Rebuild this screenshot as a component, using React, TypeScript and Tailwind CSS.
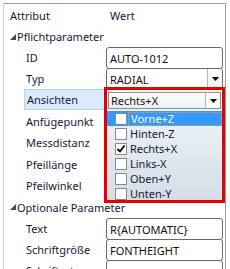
import React from "react";

const Tri = () => (
  <svg width="6" height="6" viewBox="0 0 6 6" className="shrink-0">
    <polygon points="6,0 6,6 0,6" fill="#4a4a4a" />
  </svg>
);

const Arrow = () => (
  <svg width="7" height="4" viewBox="0 0 7 4">
    <polygon points="0,0 7,0 3.5,4" fill="#000" />
  </svg>
);

const ValueBox = ({ children, dropdown }: { children?: React.ReactNode; dropdown?: boolean }) => (
  <div className="w-[117px] h-[22px] border border-[#6b6b6b] rounded-[3px] bg-white flex items-center overflow-hidden">
    <div className="flex-1 pl-[3px] text-[#111]">{children}</div>
    {dropdown && (
      <div className="w-[15px] h-full border-l border-[#b5b5b5] flex items-center justify-center bg-gradient-to-b from-white to-[#eef0f2]">
        <Arrow />
      </div>
    )}
  </div>
);

const Row = ({ label, h, children }: { label: string; h: string; children?: React.ReactNode }) => (
  <div className={`flex items-start ${h}`}>
    <div className={`w-[102px] ${h} flex items-center pl-[22px] text-[#15183a]`}>{label}</div>
    {children}
  </div>
);

const items = [
  { t: "Vorne+Z", hl: true, c: false },
  { t: "Hinten-Z", hl: false, c: false },
  { t: "Rechts+X", hl: false, c: true },
  { t: "Links-X", hl: false, c: false },
  { t: "Oben+Y", hl: false, c: false },
  { t: "Unten-Y", hl: false, c: false },
];

export default function App() {
  return (
    <div className="w-[230px] h-[269px] bg-white overflow-hidden relative font-['Noto_Sans',sans-serif] text-[11px] leading-none">
      <div className="ml-[3px] mt-[3px] w-[223px] h-[300px] border-t border-l border-r border-t-[#9c9c9c] border-r-[#9c9c9c] border-l-[#d6d6d6]">
        <div className="flex h-[22px] items-center text-[#15183a]">
          <div className="w-[102px] pl-[6px]">Attribut</div>
          <div className="pl-[4px]">Wert</div>
        </div>
        <div className="flex h-[21px] items-center pl-[6px] text-[#15183a]">
          <Tri />
          <span className="ml-[1px]">Pflichtparameter</span>
        </div>
        <Row label="ID" h="h-[21px]">
          <ValueBox>AUTO-1012</ValueBox>
        </Row>
        <Row label="Typ" h="h-[21px]">
          <ValueBox dropdown>RADIAL</ValueBox>
        </Row>
        <div className="flex items-start h-[21px]">
          <div className="w-[102px] h-[21px] pl-[20px]">
            <div className="h-[21px] bg-[#d9eaf8] border-y border-l border-[#b3d4f0] flex items-center pl-[2px] text-[#15183a]">
              Ansichten
            </div>
          </div>
        </div>
        <Row label="Anfügepunkt" h="h-[22px]" />
        <Row label="Messdistanz" h="h-[21px]" />
        <Row label="Pfeillänge" h="h-[22px]" />
        <Row label="Pfeilwinkel" h="h-[21px]" />
        <div className="flex h-[22px] items-center pl-[6px] text-[#15183a]">
          <Tri />
          <span className="ml-[1px]">Optionale Parameter</span>
        </div>
        <Row label="Text" h="h-[21px]">
          <ValueBox>R{"{AUTOMATIC}"}</ValueBox>
        </Row>
        <Row label="Schriftgröße" h="h-[21px]">
          <ValueBox>FONTHEIGHT</ValueBox>
        </Row>
        <Row label="Schriftart" h="h-[21px]">
          <ValueBox></ValueBox>
        </Row>
      </div>

      <div className="absolute left-[104px] top-[87px] w-[121px] h-[116px] border-[3px] border-[#e60000] bg-gradient-to-b from-[#f5f7f9] to-[#d3dee7] z-10 overflow-hidden">
        <div className="ml-[1px] mt-[2px] w-[113px] h-[17px] border border-[#8e8e8e] bg-gradient-to-b from-white to-[#eceff2] flex items-center">
          <div className="flex-1 pl-[2px] text-[#111]">Rechts+X</div>
          <div className="w-[15px] h-[15px] border-l border-[#b5b5b5] bg-white flex items-center justify-center">
            <Arrow />
          </div>
        </div>
        <div className="mt-[2px] flex flex-col">
          {items.map((it) => (
            <div key={it.t} className={`h-[15px] flex items-center ${it.hl ? "bg-[#3399ff]" : ""}`}>
              <div className="ml-[8px] w-[12px] h-[12px] border border-[#8a8a8a] bg-white flex items-center justify-center shrink-0">
                {it.c && (
                  <svg width="10" height="10" viewBox="0 0 10 10">
                    <path d="M1.5 5 L4 7.5 L8.5 1.5" fill="none" stroke="#000" strokeWidth="1.8" />
                  </svg>
                )}
              </div>
              <div
                className={`ml-[1px] flex-1 h-[14px] flex items-center pl-[2px] ${
                  it.hl ? "text-white border border-dotted border-[#f0a040]" : "text-[#15183a]"
                }`}
              >
                {it.t}
              </div>
            </div>
          ))}
        </div>
      </div>
    </div>
  );
}
